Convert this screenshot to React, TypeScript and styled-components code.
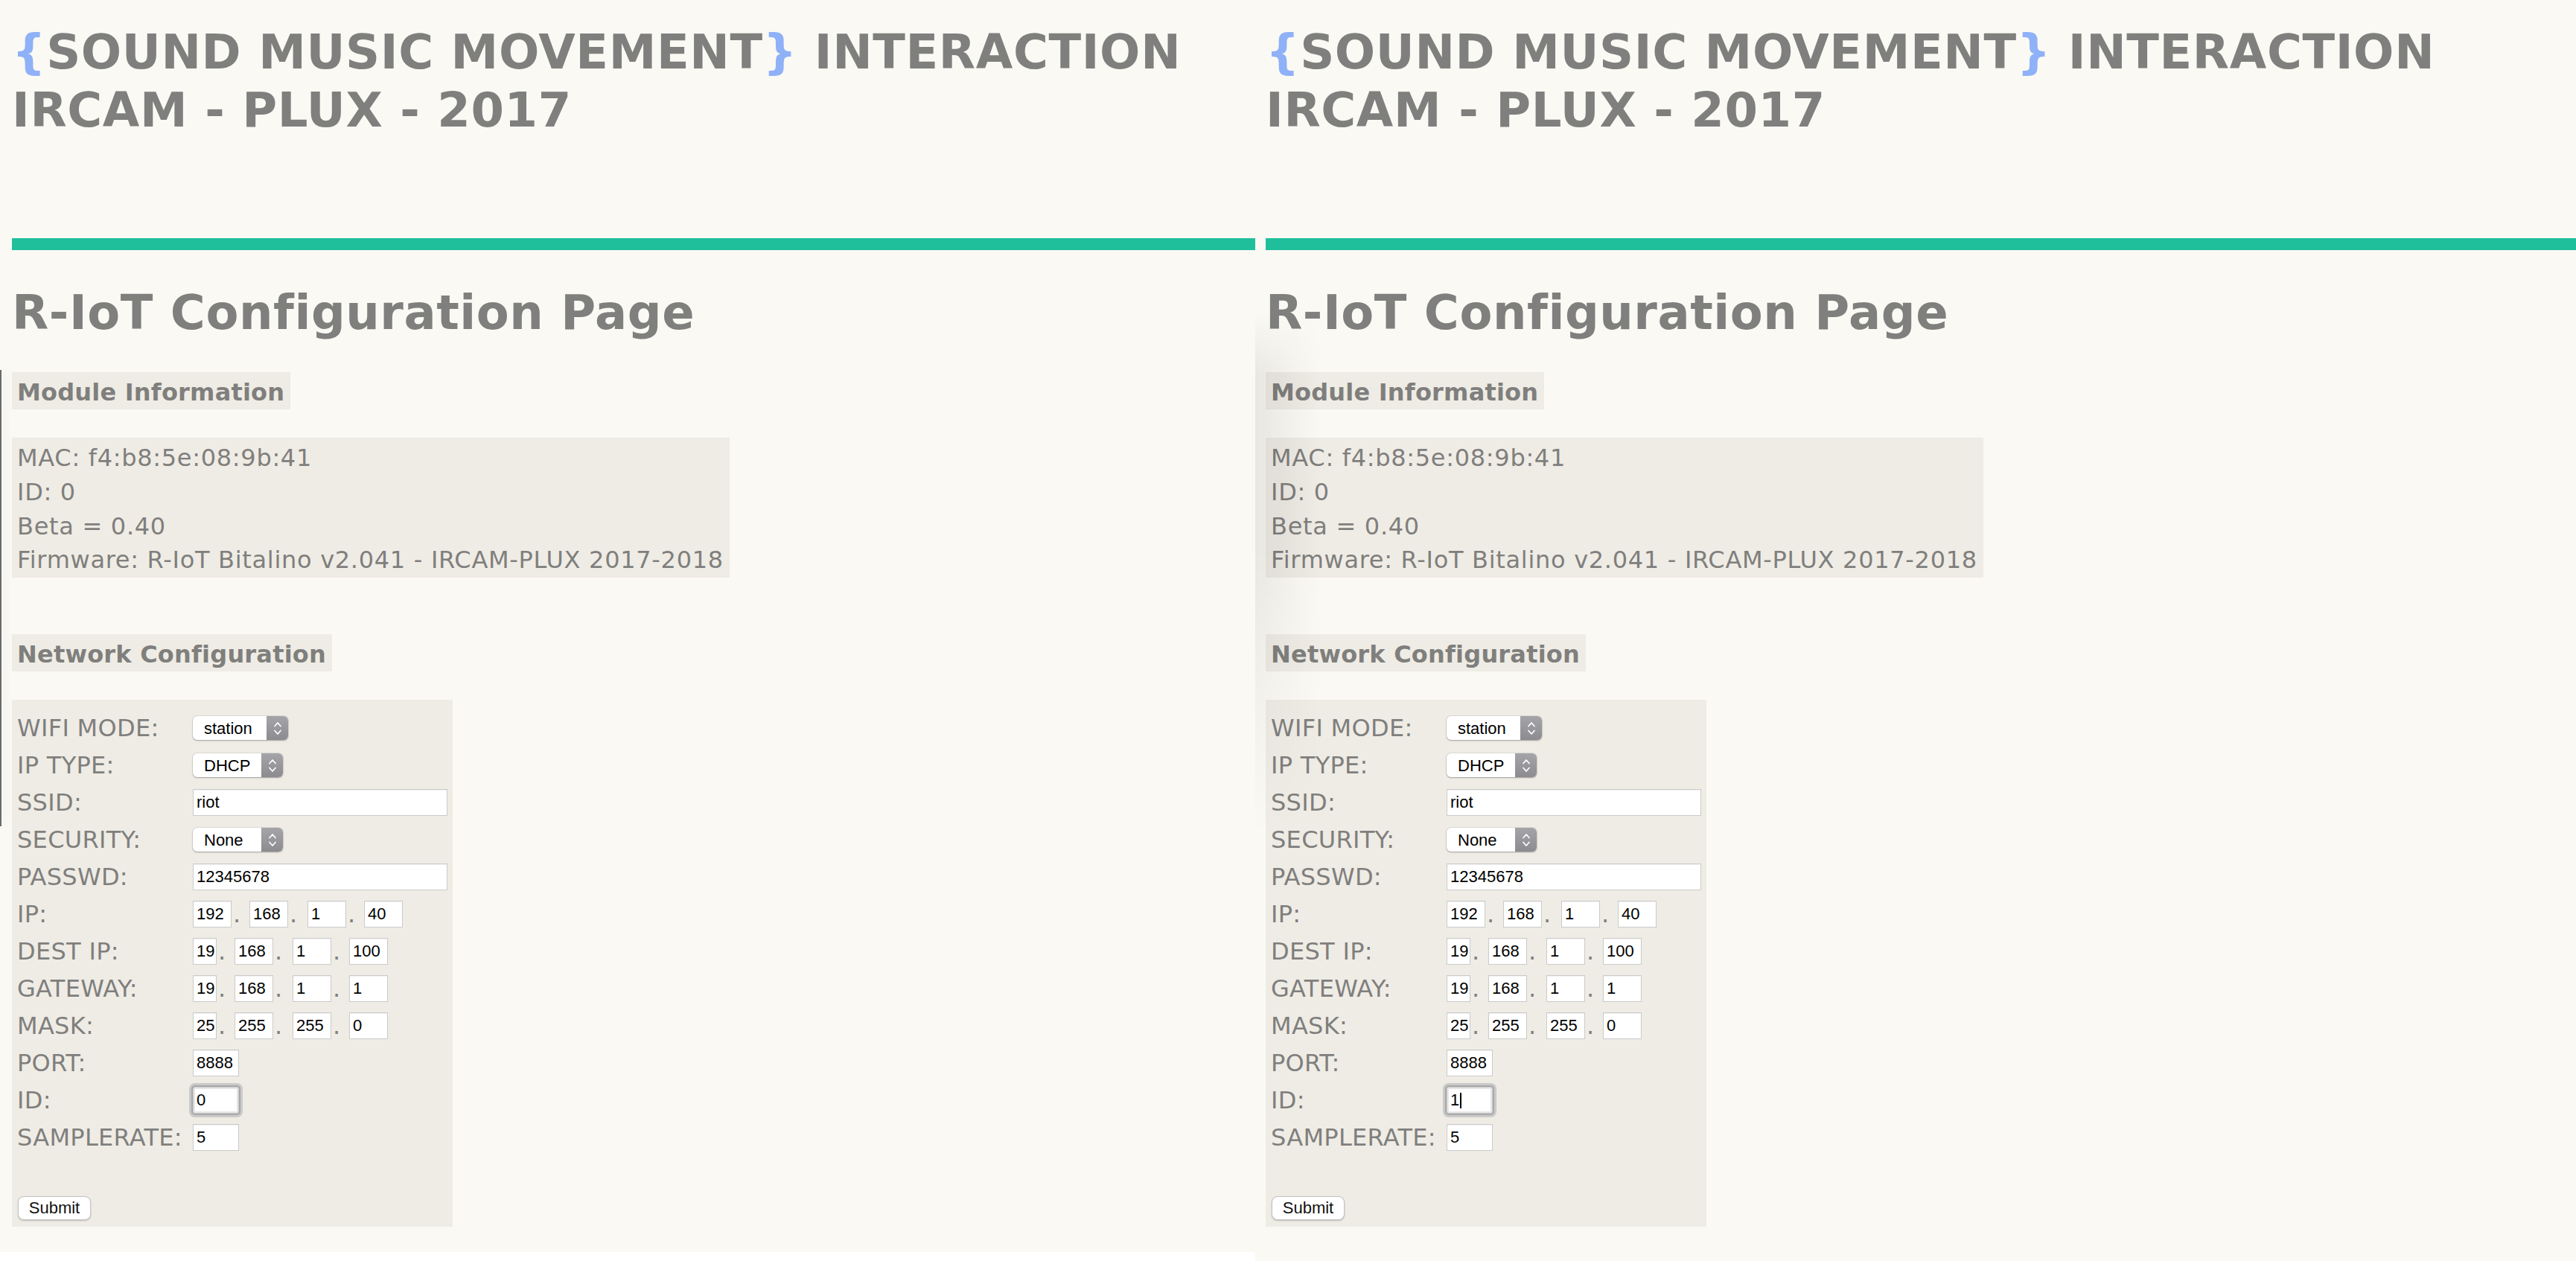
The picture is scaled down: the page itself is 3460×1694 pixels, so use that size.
import React from "react";
import styled, { createGlobalStyle } from "styled-components";

const GlobalStyle = createGlobalStyle`
  html, body {
    margin: 0;
    padding: 0;
    background: #ffffff;
  }
`;

const textGrey = "#7f7f7d";
const paper = "#faf9f4";
const tint = "#efece5";
const uiFont = `"Liberation Sans", Arial, sans-serif`;
const pageFont = `"DejaVu Sans", Verdana, sans-serif`;

const Screen = styled.div`
  display: flex;
  align-items: flex-start;
  width: 3460px;
  height: 1694px;
  overflow: hidden;
  background: #ffffff;
`;

const Panel = styled.div<{ $inset: number; $width?: number; $height: number; $edge?: boolean }>`
  position: relative;
  box-sizing: border-box;
  ${(p) => (p.$width ? `width: ${p.$width}px;` : "flex: 1;")}
  height: ${(p) => p.$height}px;
  padding-left: ${(p) => p.$inset}px;
  background: ${paper};
  color: ${textGrey};
  font-family: ${pageFont};
  overflow: hidden;

  /* stray window edge seen at the left of each capture */
  ${(p) =>
    p.$edge
      ? `&::before {
    content: "";
    position: absolute;
    left: 0;
    top: 497px;
    width: 2px;
    height: 613px;
    background: #6b6b6b;
    box-shadow: 3px 0 14px rgba(0, 0, 0, 0.12);
  }`
      : `&::before {
    content: "";
    position: absolute;
    left: 0;
    top: 420px;
    width: 90px;
    height: 700px;
    background: linear-gradient(to right, rgba(0, 0, 0, 0.07), rgba(0, 0, 0, 0));
    -webkit-mask-image: linear-gradient(to bottom, transparent, #000 12%, #000 45%, transparent);
    mask-image: linear-gradient(to bottom, transparent, #000 12%, #000 45%, transparent);
  }`}
`;

const Masthead = styled.h1`
  margin: 31px 0 0;
  font-size: 64px;
  line-height: 78px;
  font-weight: bold;
  letter-spacing: 0.6px;
  white-space: nowrap;
`;

const Brace = styled.span`
  color: #8fb1f7;
`;

const Rule = styled.div`
  margin-top: 133px;
  height: 16px;
  background: #1fbf9c;
`;

const Title = styled.h2`
  margin: 45px 0 0;
  font-size: 64px;
  line-height: 78px;
  font-weight: bold;
  letter-spacing: 0.55px;
  white-space: nowrap;
`;

const Tag = styled.div<{ $top: number }>`
  display: table;
  margin-top: ${(p) => p.$top}px;
  box-sizing: border-box;
  height: 50px;
  padding: 4px 8px 0 7px;
  background: ${tint};
  font-size: 32px;
  line-height: 46px;
  font-weight: bold;
  letter-spacing: 0.2px;
  white-space: nowrap;
`;

const InfoBox = styled.div`
  display: table;
  margin-top: 38px;
  box-sizing: border-box;
  height: 188px;
  padding: 5px 8px 0 7px;
  background: ${tint};
  font-size: 32px;
  line-height: 45.75px;
  letter-spacing: 0.7px;
  white-space: nowrap;
`;

const FormBox = styled.form`
  display: block;
  margin-top: 38px;
  box-sizing: border-box;
  width: 592px;
  height: 708px;
  padding: 13px 7px 0 7px;
  background: ${tint};
`;

const Row = styled.div`
  display: grid;
  grid-template-columns: 236px 1fr;
  align-items: center;
  height: 50px;
`;

const Label = styled.span`
  font-size: 32px;
  line-height: 50px;
  letter-spacing: 0.3px;
  white-space: nowrap;
`;

const Controls = styled.div`
  display: flex;
  align-items: center;
`;

const SelectBox = styled.div<{ $w: number }>`
  display: flex;
  box-sizing: border-box;
  width: ${(p) => p.$w}px;
  height: 32px;
  border-radius: 6px;
  overflow: hidden;
  background: #ffffff;
  box-shadow: 0 0 0 1px rgba(0, 0, 0, 0.07), 0 1px 2px rgba(0, 0, 0, 0.28);
`;

const SelectValue = styled.span`
  flex: 1;
  padding-left: 15px;
  font-family: ${uiFont};
  font-size: 22px;
  line-height: 33px;
  color: #000000;
`;

const SelectArrow = styled.span`
  display: flex;
  align-items: center;
  justify-content: center;
  width: 29px;
  background: linear-gradient(#a4a4a9, #8b8b90);
`;

const FieldWrap = styled.span`
  position: relative;
  display: inline-flex;
`;

const Field = styled.input<{ $w: number; $focus?: boolean }>`
  box-sizing: border-box;
  width: ${(p) => p.$w}px;
  height: 36px;
  margin: 0;
  padding: 0 1px 0 4px;
  border: 1px solid #cbcbcb;
  border-radius: ${(p) => (p.$focus ? "3px" : "0")};
  outline: none;
  background: #ffffff;
  font-family: ${uiFont};
  font-size: 22px;
  color: #000000;
  box-shadow: ${(p) =>
    p.$focus
      ? "inset 0 0 0 2px #e6e6e6, 0 0 0 2px #a9a9a9, 0 0 0 5px #cacaca"
      : "inset 0 1px 1px rgba(0,0,0,0.06)"};
`;

const Caret = styled.span`
  position: absolute;
  left: 18px;
  top: 8px;
  width: 2px;
  height: 21px;
  background: #000000;
`;

const Dot = styled.span<{ $w: number }>`
  box-sizing: border-box;
  width: ${(p) => p.$w}px;
  padding-left: 2px;
  font-size: 32px;
  line-height: 36px;
  height: 36px;
`;

const SubmitButton = styled.button`
  display: block;
  margin: 54px 0 0 1px;
  box-sizing: border-box;
  width: 98px;
  height: 32px;
  padding: 0;
  border: 1px solid #c4c4c4;
  border-radius: 8px;
  background: #ffffff;
  box-shadow: 0 1px 2px rgba(0, 0, 0, 0.22);
  font-family: ${uiFont};
  font-size: 22px;
  color: #111111;
`;

const Chevrons = () => (
  <svg width="12" height="21" viewBox="0 0 12 21" fill="none">
    <path d="M2 7.5 L6 3 L10 7.5" stroke="#ffffff" strokeWidth="1.7" strokeLinecap="round" strokeLinejoin="round" />
    <path d="M2 13.5 L6 18 L10 13.5" stroke="#ffffff" strokeWidth="1.7" strokeLinecap="round" strokeLinejoin="round" />
  </svg>
);

type Control =
  | { kind: "select"; value: string; w: number }
  | { kind: "text"; value: string; w: number; focus?: boolean }
  | { kind: "ip"; values: string[]; widths: number[] };

const narrowIp = [32, 52, 52, 52];
const wideIp = [52, 52, 52, 52];
const dotGaps = [24, 26, 24];

const rowsFor = (id: string): [string, Control][] => [
  ["WIFI MODE:", { kind: "select", value: "station", w: 128 }],
  ["IP TYPE:", { kind: "select", value: "DHCP", w: 121 }],
  ["SSID:", { kind: "text", value: "riot", w: 342 }],
  ["SECURITY:", { kind: "select", value: "None", w: 121 }],
  ["PASSWD:", { kind: "text", value: "12345678", w: 342 }],
  ["IP:", { kind: "ip", values: ["192", "168", "1", "40"], widths: wideIp }],
  ["DEST IP:", { kind: "ip", values: ["192", "168", "1", "100"], widths: narrowIp }],
  ["GATEWAY:", { kind: "ip", values: ["192", "168", "1", "1"], widths: narrowIp }],
  ["MASK:", { kind: "ip", values: ["255", "255", "255", "0"], widths: narrowIp }],
  ["PORT:", { kind: "text", value: "8888", w: 62 }],
  ["ID:", { kind: "text", value: id, w: 62, focus: true }],
  ["SAMPLERATE:", { kind: "text", value: "5", w: 62 }],
];

const renderControl = (c: Control, caret: boolean) => {
  if (c.kind === "select") {
    return (
      <SelectBox $w={c.w}>
        <SelectValue>{c.value}</SelectValue>
        <SelectArrow>
          <Chevrons />
        </SelectArrow>
      </SelectBox>
    );
  }
  if (c.kind === "text") {
    return (
      <FieldWrap>
        <Field $w={c.w} $focus={c.focus} defaultValue={c.value} readOnly />
        {c.focus && caret ? <Caret /> : null}
      </FieldWrap>
    );
  }
  return (
    <>
      {c.values.map((v, i) => (
        <React.Fragment key={i}>
          <Field $w={c.widths[i]} defaultValue={v} readOnly />
          {i < 3 ? <Dot $w={dotGaps[i]}>.</Dot> : null}
        </React.Fragment>
      ))}
    </>
  );
};

type PageProps = {
  inset: number;
  width?: number;
  height: number;
  edge?: boolean;
  id: string;
  caret?: boolean;
};

const ConfigPage: React.FunctionComponent<PageProps> = ({ inset, width, height, edge, id, caret }) => {
  return (
    <Panel $inset={inset} $width={width} $height={height} $edge={edge}>
      <Masthead>
        <Brace>{"{"}</Brace>SOUND MUSIC MOVEMENT<Brace>{"}"}</Brace> INTERACTION
        <br />
        IRCAM - PLUX - 2017
      </Masthead>
      <Rule />
      <Title>R-IoT Configuration Page</Title>

      <Tag $top={41}>Module Information</Tag>
      <InfoBox>
        MAC: f4:b8:5e:08:9b:41
        <br />
        ID: 0
        <br />
        Beta = 0.40
        <br />
        Firmware: R-IoT Bitalino v2.041 - IRCAM-PLUX 2017-2018
      </InfoBox>

      <Tag $top={76}>Network Configuration</Tag>
      <FormBox onSubmit={(e) => e.preventDefault()}>
        {rowsFor(id).map(([label, control]) => (
          <Row key={label}>
            <Label>{label}</Label>
            <Controls>{renderControl(control, !!caret)}</Controls>
          </Row>
        ))}
        <SubmitButton type="submit">Submit</SubmitButton>
      </FormBox>
    </Panel>
  );
};

export default function App() {
  return (
    <>
      <GlobalStyle />
      <Screen>
        <ConfigPage inset={16} width={1686} height={1682} edge id="0" />
        <ConfigPage inset={14} height={1694} id="1" caret />
      </Screen>
    </>
  );
}
